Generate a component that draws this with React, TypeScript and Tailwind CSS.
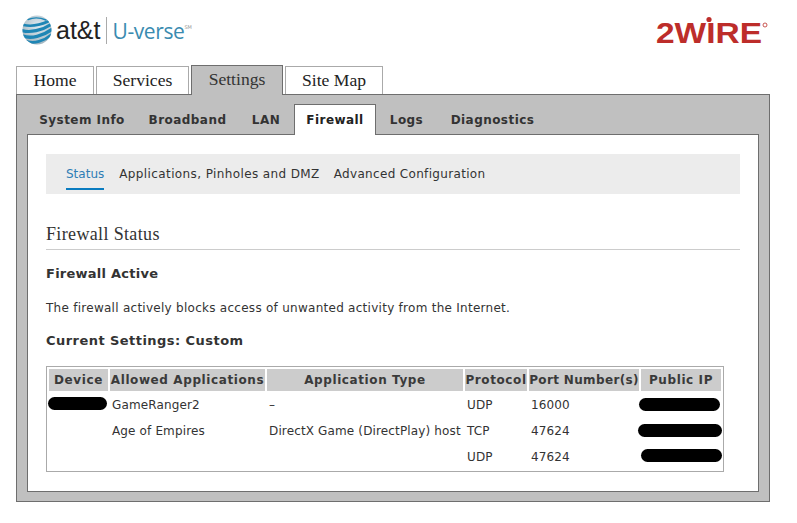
import React from "react";

const sans = "font-['DejaVu_Sans','Liberation_Sans',sans-serif]";

function Globe() {
  return (
    <svg width="30" height="30" viewBox="0 0 30 30" className="block">
      <defs>
        <radialGradient id="g" cx="0.55" cy="0.35" r="0.8">
          <stop offset="0" stopColor="#dfeaf0" />
          <stop offset="0.55" stopColor="#b9c9d2" />
          <stop offset="1" stopColor="#8fa3ae" />
        </radialGradient>
        <clipPath id="c"><circle cx="15" cy="15" r="14.5" /></clipPath>
      </defs>
      <circle cx="15" cy="15" r="14.5" fill="url(#g)" />
      <g clipPath="url(#c)" fill="none" stroke="#1f86b5" strokeLinecap="round">
        <path d="M6 4.5C11 2.5 18 2.5 24 5" strokeWidth="1.4" />
        <path d="M1.5 10C8 11.5 18 10 26 6.5" strokeWidth="2.6" />
        <path d="M0 15.5C8 18 20 15.5 29 9.5" strokeWidth="3.2" />
        <path d="M1 21C9 24 21 21 30 14.5" strokeWidth="3.4" />
        <path d="M5 26.5C12 29 22 26 29 20" strokeWidth="2.8" />
      </g>
    </svg>
  );
}

function Redact({ w, ml = 0, mt = 0 }: { w: number; ml?: number; mt?: number }) {
  return <div style={{ width: w, marginLeft: ml, marginTop: mt }} className="h-[13px] rounded-full bg-black" />;
}

const top = [
  { t: "Home", w: "w-[78px]" },
  { t: "Services", w: "w-[93px]" },
  { t: "Settings", w: "w-[92px]", a: true },
  { t: "Site Map", w: "w-[98px]" },
];
const sub = [
  { t: "System Info", w: "w-[110px]" },
  { t: "Broadband", w: "w-[101px]" },
  { t: "LAN", w: "w-[56px]" },
  { t: "Firewall", w: "w-[82px]", a: true },
  { t: "Logs", w: "w-[61px]" },
  { t: "Diagnostics", w: "w-[111px]" },
];

const th = "bg-[#cccccc] h-[22px] p-0 text-[12px] font-bold text-[#3a3a3a] whitespace-nowrap";
const td = "h-[26px] p-0 pt-[2px] align-middle whitespace-nowrap";
const tdr = "h-[26px] p-0 align-middle";

export default function App() {
  return (
    <div className={`w-[797px] h-[523px] bg-white overflow-hidden ${sans}`}>
      <div className="flex justify-between h-[65px]">
        <div className="flex items-start pl-[22px] pt-[15px]">
          <Globe />
          <span className="ml-[4px] mt-[1px] text-[25px] leading-[28px] font-['Liberation_Sans',sans-serif] tracking-[0px] text-[#222222]">at&amp;t</span>
          <div className="ml-[6px] w-px h-[27px] mt-[2px] bg-[#aaaaaa]" />
          <span className="ml-[5px] mt-[2px] text-[21px] leading-[28px] font-['Open_Sans',sans-serif] tracking-[-0.4px] text-[#3a8bb0]">U-verse</span>
          <span className="mt-[9px] text-[5px] leading-[6px] text-[#999999]">SM</span>
        </div>
        <svg width="116" height="32" viewBox="0 0 116 32" className="mt-[16px] mr-[27px] block">
          <text x="2" y="27" textLength="106" lengthAdjust="spacingAndGlyphs" fontFamily="'Liberation Sans',sans-serif" fontWeight="700" fontSize="29" fill="#bd2d2a">2WIRE</text>
          <circle cx="55" cy="3.5" r="2.6" fill="#bd2d2a" />
          <circle cx="111" cy="9" r="2" fill="none" stroke="#bd2d2a" strokeWidth="0.8" />
        </svg>
      </div>

      <div className="flex items-end gap-[2px] ml-[16px] h-[29px] relative z-10">
        {top.map((x) => (
          <div
            key={x.t}
            className={`${x.w} flex items-center justify-center font-['Liberation_Serif',serif] text-[17.6px] border-x-[1px] border-t-[1px] ${
              x.a
                ? "h-[30px] -mb-[1px] pb-[2px] bg-[#c0c0c0] border-[#6e6e6e] text-[#333333]"
                : "h-[28px] bg-white border-[#aaaaaa] text-[#222222]"
            }`}
          >
            {x.t}
          </div>
        ))}
      </div>

      <div className="ml-[16px] w-[754px] h-[408px] border-[1px] border-[#6e6e6e] bg-[#c0c0c0] px-[10px] pt-[9px]">
        <div className="flex h-[31px] relative z-10">
          {sub.map((x) => (
            <div
              key={x.t}
              className={`${x.w} flex items-center justify-center text-[12px] font-bold tracking-[0.45px] ${
                x.a ? "h-[31px] bg-white border-x-[1px] border-t-[1px] border-[#6e6e6e] text-[#222222]" : "text-[#333333]"
              }`}
            >
              {x.t}
            </div>
          ))}
        </div>

        <div className="-mt-[1px] h-[358px] border-[1px] border-[#6e6e6e] bg-white px-[18px] pt-[19px] text-[12px] text-[#333333]">
          <div className="w-[694px] h-[40px] bg-[#ececec] flex pl-[20px] items-start pt-[11px]">
            <span className="text-[#2e7db5] border-b-[2px] border-[#0a7cc0] h-[25px] leading-[18px]">Status</span>
            <span className="ml-[15px] leading-[18px] tracking-[0.39px]">Applications, Pinholes and DMZ</span>
            <span className="ml-[14px] leading-[18px] tracking-[0.33px]">Advanced Configuration</span>
          </div>

          <div className="w-[694px] mt-[27px] h-[29px] border-b-[1px] border-[#cccccc] font-['Liberation_Serif',serif] text-[18px] leading-[26px] tracking-[0.35px] text-[#333333]">
            Firewall Status
          </div>

          <div className="mt-[15px] text-[13px] leading-[18px] font-bold tracking-[0.25px] text-[#333333]">Firewall Active</div>
          <div className="mt-[16px] leading-[18px] tracking-[0.27px]">The firewall actively blocks access of unwanted activity from the Internet.</div>
          <div className="mt-[15px] text-[13px] leading-[18px] font-bold tracking-[0.45px] text-[#333333]">Current Settings: Custom</div>

          <div className="mt-[16px] w-[678px] h-[106px] border-[1px] border-[#aaaaaa] pl-[2px] pt-[2px]">
            <table className="border-separate border-spacing-0 table-fixed w-[672px]">
              <colgroup>
                <col className="w-[61px]" />
                <col className="w-[157px]" />
                <col className="w-[198px]" />
                <col className="w-[64px]" />
                <col className="w-[112px]" />
                <col className="w-[80px]" />
              </colgroup>
              <thead>
                <tr>
                  {["Device", "Allowed Applications", "Application Type", "Protocol", "Port Number(s)", "Public IP"].map((h, i) => (
                    <th key={h} className={`${th} ${h === "Port Number(s)" ? "tracking-[0.35px]" : "tracking-[0.6px]"} ${i < 5 ? "border-r-[2px] border-white" : ""} text-center`}>{h}</th>
                  ))}
                </tr>
              </thead>
              <tbody className="tracking-[0.14px]">
                <tr>
                  <td className={tdr}><Redact w={59} ml={-1} mt={-1} /></td>
                  <td className={`${td} pl-[2px]`}>GameRanger2</td>
                  <td className={`${td} pl-[2px]`}>–</td>
                  <td className={`${td} pl-[2px]`}>UDP</td>
                  <td className={`${td} pl-[2px]`}>16000</td>
                  <td className={tdr}><Redact w={81} ml={-2} mt={1} /></td>
                </tr>
                <tr>
                  <td className={tdr} />
                  <td className={`${td} pl-[2px]`}>Age of Empires</td>
                  <td className={`${td} pl-[2px]`}>DirectX Game (DirectPlay) host</td>
                  <td className={`${td} pl-[2px]`}>TCP</td>
                  <td className={`${td} pl-[2px]`}>47624</td>
                  <td className={tdr}><Redact w={84} ml={-3} mt={1} /></td>
                </tr>
                <tr>
                  <td className={tdr} />
                  <td className={tdr} />
                  <td className={tdr} />
                  <td className={`${td} pl-[2px]`}>UDP</td>
                  <td className={`${td} pl-[2px]`}>47624</td>
                  <td className={tdr}><Redact w={81} ml={0} mt={-1} /></td>
                </tr>
              </tbody>
            </table>
          </div>
        </div>
      </div>
    </div>
  );
}
